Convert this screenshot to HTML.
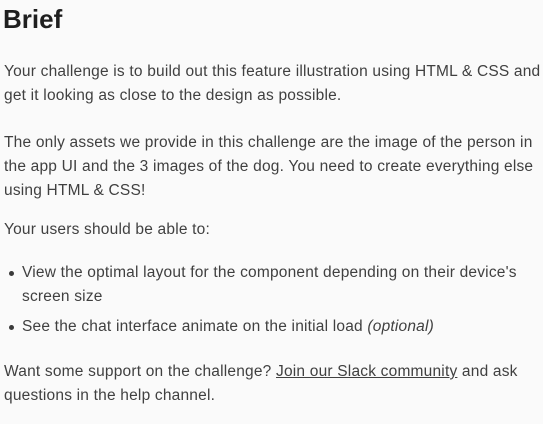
<!DOCTYPE html>
<html><head><meta charset="utf-8"><style>
html,body{margin:0;padding:0;background:#fafafa;width:543px;height:424px;overflow:hidden}
body{font-family:"Liberation Sans",sans-serif;color:#404040;font-size:15.5px;letter-spacing:0.2px;position:relative}
.l{position:absolute;left:4px;white-space:nowrap;line-height:24px}
h1{position:absolute;left:3px;top:2px;margin:0;font-size:26px;letter-spacing:0;font-weight:bold;color:#1f1f1f;line-height:34px}
.b{left:22px}
.dot{position:absolute;left:9px;width:5px;height:5px;border-radius:50%;background:#3a3a3a}
a{color:#404040;text-decoration:underline}
</style></head><body>
<h1>Brief</h1>
<div class="l" style="top:60px">Your challenge is to build out this feature illustration using HTML &amp; CSS and</div>
<div class="l" style="top:84px">get it looking as close to the design as possible.</div>
<div class="l" style="top:131px">The only assets we provide in this challenge are the image of the person in</div>
<div class="l" style="top:155px">the app UI and the 3 images of the dog. You need to create everything else</div>
<div class="l" style="top:179px">using HTML &amp; CSS!</div>
<div class="l" style="top:218px">Your users should be able to:</div>
<div class="dot" style="top:271px"></div>
<div class="l b" style="top:261px">View the optimal layout for the component depending on their device's</div>
<div class="l b" style="top:285px">screen size</div>
<div class="dot" style="top:325px"></div>
<div class="l b" style="top:315px">See the chat interface animate on the initial load <i>(optional)</i></div>
<div class="l" style="top:360px">Want some support on the challenge? <a>Join our Slack community</a> and ask</div>
<div class="l" style="top:384px">questions in the help channel.</div>
</body></html>
